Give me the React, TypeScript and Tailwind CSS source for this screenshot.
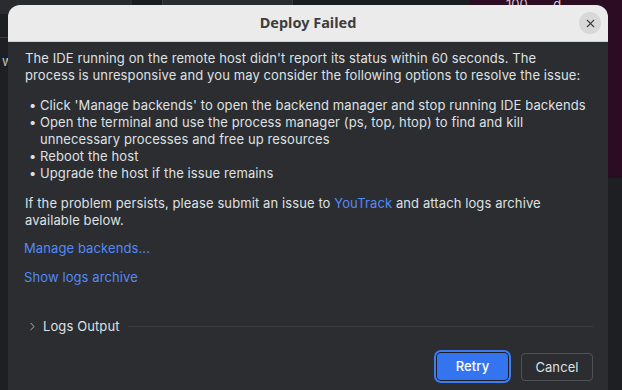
import { ChevronRight, X } from "lucide-react";

const bullets = [
  "Click 'Manage backends' to open the backend manager and stop running IDE backends",
  "Open the terminal and use the process manager (ps, top, htop) to find and kill unnecessary processes and free up resources",
  "Reboot the host",
  "Upgrade the host if the issue remains",
];

export default function App() {
  return (
    <div className="relative h-[390px] w-[622px] overflow-hidden bg-[#1e1f22] font-['Inter',sans-serif]">
      {/* desktop behind the dialog */}
      <div className="flex h-[14px]">
        <div className="w-[132px] bg-[#2a2b2e]" />
        <div className="w-[30px] bg-[#1b1c1e]" />
        <div className="-mt-[4px] h-[18px] w-[131px] rounded-b-[6px] border border-[#3a3b3e] bg-[#2b2c2f]" />
        <div className="w-[177px] bg-[#1c1d1f]" />
        <div className="flex-1 bg-[#2c0c22] pl-[36px] text-[13px] leading-[8px] text-[#d8c8d2]">100 &nbsp; &nbsp; &nbsp; d</div>
      </div>
      <div className="absolute right-0 top-[14px] h-[164px] w-[14px] bg-[#2c0c22]" />
      <div className="absolute left-0 top-[37px] h-[1px] w-[8px] bg-[#3a3b3e]" />
      <div className="absolute left-[2px] top-[52px] text-[13px] text-[#bfc1c5]">w</div>

      {/* dialog window */}
      <div className="absolute left-[8px] top-[5px] flex h-[400px] w-[600px] flex-col overflow-hidden rounded-t-[12px] bg-[#2b2d30]">
        <div className="relative flex h-[37px] shrink-0 items-center justify-center border-b border-[#d2d2d2] bg-[#ebebeb]">
          <span className="font-['Noto_Sans',sans-serif] text-[14.5px] font-bold text-[#3d3d3d]">Deploy Failed</span>
          <button className="absolute right-[7px] top-[7px] flex h-[22px] w-[22px] items-center justify-center rounded-full bg-[#d8d8d8] text-[#3d3d3d]">
            <X size={13} strokeWidth={2} />
          </button>
        </div>

        <div className="flex flex-1 flex-col pl-[17px] pr-[15px] pt-[8px] text-[13px] leading-[17px] tracking-[0.1px] text-[#dfe1e5]">
          <p>
            The IDE running on the remote host didn't report its status within 60 seconds. The
            <br />
            process is unresponsive and you may consider the following options to resolve the issue:
          </p>
          <ul className="mt-[13px]">
            {bullets.map((b) => (
              <li key={b} className="flex">
                <span className="w-[15px] shrink-0 pl-[4px]">•</span>
                <span>{b}</span>
              </li>
            ))}
          </ul>
          <p className="mt-[13px] pr-[50px]">
            If the problem persists, please submit an issue to <span className="text-[#548af7]">YouTrack</span> and attach
            logs archive available below.
          </p>
          <a className="-ml-[1px] mt-[11px] text-[#548af7]">Manage backends...</a>
          <a className="-ml-[1px] mt-[12px] text-[#548af7]">Show logs archive</a>

          <div className="mt-[32px] flex items-center">
            <ChevronRight size={13} strokeWidth={1.8} className="ml-[1px] text-[#b4b8bf]" />
            <span className="ml-[4px]">Logs Output</span>
            <div className="ml-[8px] h-[1px] flex-1 bg-[#393b40]" />
          </div>

          <div className="mt-[18px] flex justify-end gap-[13px]">
            <button className="h-[27px] w-[71px] rounded-[4px] bg-[#3574f0] font-medium text-white shadow-[0_0_0_1px_#1e1f22,0_0_0_3px_#3d7cf3]">
              Retry
            </button>
            <button className="h-[28px] w-[72px] rounded-[4px] border border-[#4e5157] text-[#dfe1e5]">Cancel</button>
          </div>
        </div>
      </div>
    </div>
  );
}
